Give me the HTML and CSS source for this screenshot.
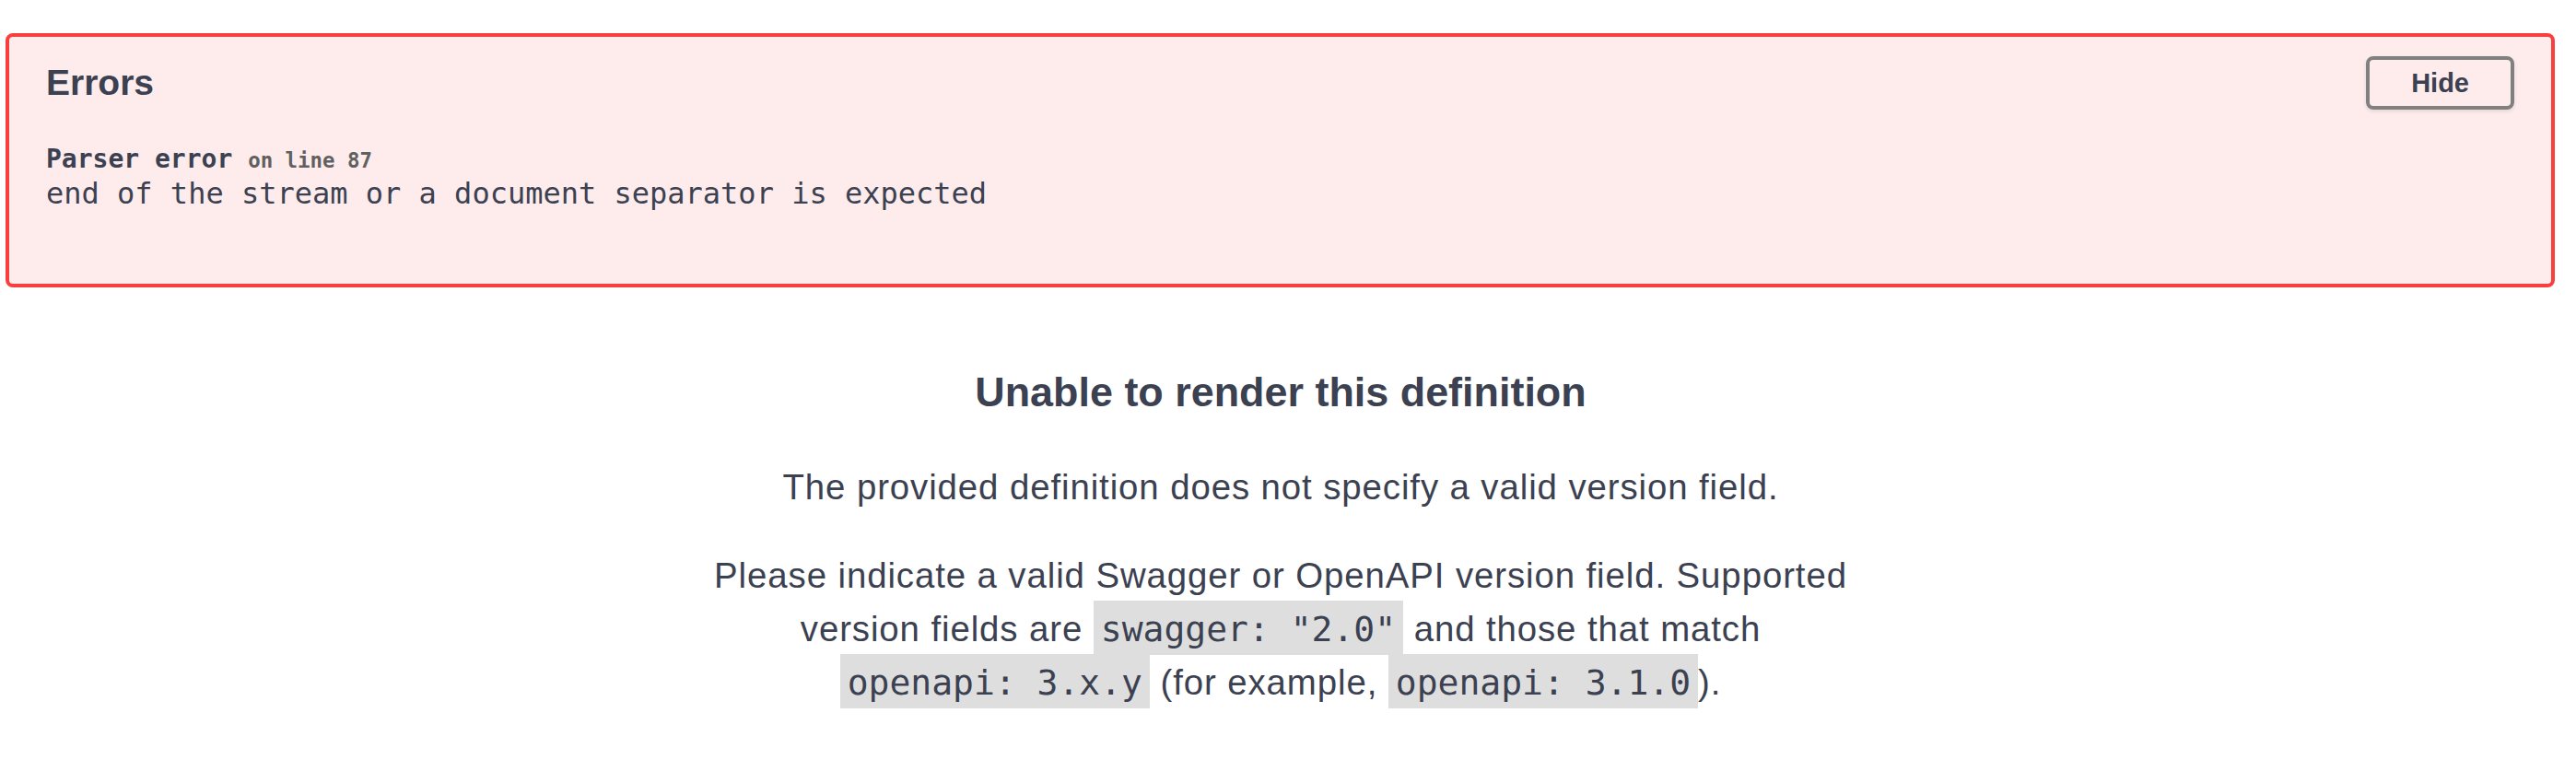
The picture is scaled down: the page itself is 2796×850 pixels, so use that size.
FILE: index.html
```html
<!DOCTYPE html>
<html lang="en">
<head>
<meta charset="utf-8">
<title>Swagger UI</title>
<link rel="stylesheet" href="styles.css">
</head>
<body>
<div class="errors-wrapper">
  <hgroup class="error-head">
    <h4 class="errors-title">Errors</h4>
    <button class="btn">Hide</button>
  </hgroup>
  <div class="errors">
    <h4 class="error-h"><span>Parser error </span><small>on line 87</small></h4>
    <span class="message">end of the stream or a document separator is expected</span>
  </div>
</div>
<div class="version-pragma">
  <div class="pragma-inner">
    <h3 class="pragma-title">Unable to render this definition</h3>
    <p class="pragma-p">The provided definition does not specify a valid version field.</p>
    <p class="pragma-p">Please indicate a valid Swagger or OpenAPI version field. Supported version fields are <code class="pragma-code">swagger: "2.0"</code> and those that match <code class="pragma-code">openapi: 3.x.y</code> (for example, <code class="pragma-code">openapi: 3.1.0</code>).</p>
  </div>
</div>
</body>
</html>
```

FILE: styles.css
```css
html, body {
  margin: 0;
  padding: 0;
  background: #ffffff;
}

body {
  font-family: "Liberation Sans", Arial, sans-serif;
  color: #3b4151;
  width: 2796px;
}

.errors-wrapper {
  margin: 36px 23px 0 6px;
  padding: 21px 40px 79px;
  border: 4px solid #f93e3e;
  border-radius: 8px;
  background: #feecec;
}

.error-head {
  display: flex;
  align-items: center;
  margin: 0;
}

.errors-title {
  flex: 1;
  margin: 0;
  font-family: "Liberation Sans", Arial, sans-serif;
  font-size: 39px;
  font-weight: 700;
  color: #3b4151;
  line-height: 46px;
}

.btn {
  font-family: "Liberation Sans", Arial, sans-serif;
  font-size: 29px;
  font-weight: 700;
  line-height: 30px;
  padding: 10px 45px;
  border: 4px solid #808080;
  border-radius: 8px;
  background: transparent;
  color: #3b4151;
  box-shadow: 0 2px 4px rgba(0, 0, 0, 0.1);
}

.errors {
  margin-top: 37px;
}

.error-h {
  margin: 0;
  font-family: "DejaVu Sans Mono", monospace;
  font-size: 28px;
  font-weight: 700;
  line-height: 34px;
  color: #3b4151;
}

.error-h small {
  font-size: 22.4px;
  color: #606060;
}

.message {
  display: block;
  font-family: "DejaVu Sans Mono", monospace;
  font-size: 32px;
  line-height: 38px;
  white-space: pre-line;
  color: #3b4151;
}

.version-pragma {
  padding: 89px 16px 0 0;
  display: flex;
  justify-content: center;
}

.pragma-inner {
  max-width: 1260px;
  text-align: center;
  font-size: 38.4px;
  line-height: 57.6px;
}

.pragma-title {
  margin: 0 0 49px;
  font-size: 44.9px;
  font-weight: 700;
  line-height: 50px;
  color: #3b4151;
}

.pragma-p {
  margin: 0 0 38.4px;
  letter-spacing: 0.9px;
}

.pragma-code {
  font-family: "DejaVu Sans Mono", monospace;
  font-size: 38px;
  letter-spacing: 0;
  background-color: #dedede;
  padding: 9px 8px 6px;
  white-space: pre;
}
```
